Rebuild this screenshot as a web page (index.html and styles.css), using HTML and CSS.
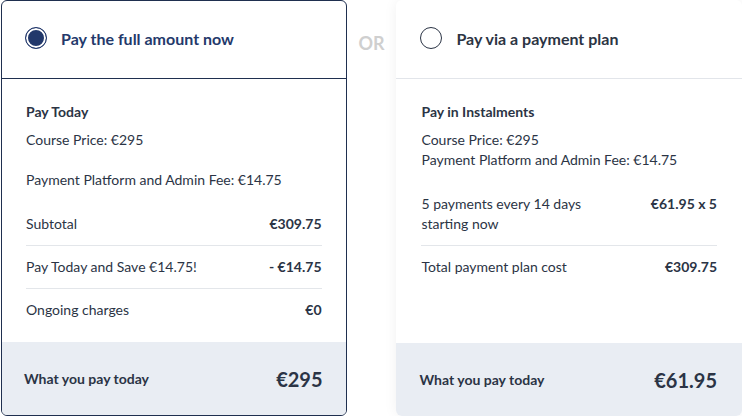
FILE: index.html
```html
<!DOCTYPE html>
<html lang="en">
<head>
<meta charset="UTF-8">
<title>Payment options</title>
<link rel="stylesheet" href="styles.css">
</head>
<body>

<div class="options">

    <!-- Pay in full -->
    <div class="card selected">
        <div class="card-head">
            <span class="radio checked"></span>
            <span class="head-label">Pay the full amount now</span>
        </div>
        <div class="card-body">
            <div class="body-title">Pay Today</div>
            <p class="line">Course Price: €295</p>
            <p class="line gap">Payment Platform and Admin Fee: €14.75</p>
            <div class="row first">
                <span>Subtotal</span>
                <strong>€309.75</strong>
            </div>
            <div class="row">
                <span>Pay Today and Save €14.75!</span>
                <strong>- €14.75</strong>
            </div>
            <div class="row last">
                <span>Ongoing charges</span>
                <strong>€0</strong>
            </div>
        </div>
        <div class="card-foot">
            <span>What you pay today</span>
            <span class="total">€295</span>
        </div>
    </div>

    <div class="or">OR</div>

    <!-- Payment plan -->
    <div class="card">
        <div class="card-head">
            <span class="radio"></span>
            <span class="head-label">Pay via a payment plan</span>
        </div>
        <div class="card-body">
            <div class="body-title">Pay in Instalments</div>
            <p class="line">Course Price: €295</p>
            <p class="line">Payment Platform and Admin Fee: €14.75</p>
            <div class="row first">
                <span>5 payments every 14 days<br>starting now</span>
                <strong>€61.95 x 5</strong>
            </div>
            <div class="row last">
                <span>Total payment plan cost</span>
                <strong>€309.75</strong>
            </div>
        </div>
        <div class="card-foot">
            <span>What you pay today</span>
            <span class="total">€61.95</span>
        </div>
    </div>

</div>

</body>
</html>
```

FILE: styles.css
```css
body {
    margin: 0;
    background: #fff;
    font-family: Lato, "Open Sans", sans-serif;
    font-size: 14px;
    color: #2b3445;
}
.options {
    display: flex;
    align-items: flex-start;
    padding-left: 1px;
}
.card {
    width: 346px;
    height: 416px;
    box-sizing: border-box;
    display: flex;
    flex-direction: column;
    background: #fff;
    border-radius: 6px;
    overflow: hidden;
    box-shadow: 0 0 14px rgba(0,0,0,0.06);
}
.card.selected {
    border: 1px solid #1f2f4f;
    box-shadow: none;
}
.card-head {
    height: 79px;
    box-sizing: border-box;
    display: flex;
    align-items: center;
    padding: 0 24px 2px;
    border-bottom: 1px solid #e2e5ea;
}
.card.selected .card-head {
    height: 78px;
    padding-left: 23px;
    padding-bottom: 3px;
    border-bottom-color: #1f2f4f;
}
.radio {
    width: 20px;
    height: 20px;
    border: 1px solid #2b3445;
    border-radius: 50%;
    box-sizing: content-box;
    margin-right: 14px;
    flex-shrink: 0;
}
.radio.checked {
    background: #22386b;
    box-shadow: inset 0 0 0 2px #fff;
    border-color: #22386b;
}
.head-label {
    font-size: 16px;
    font-weight: 700;
    color: #2c3443;
}
.card.selected .head-label {
    color: #24396b;
}
.card-body {
    flex: 1;
    padding: 23px 25px 0;
}
.card.selected .card-body {
    padding: 23px 24px 0;
}
.body-title {
    font-weight: 700;
    line-height: 20px;
    margin-bottom: 8px;
}
.line {
    margin: 0;
    line-height: 20px;
}
.line.gap {
    margin-top: 20px;
}
.row {
    display: flex;
    justify-content: space-between;
    align-items: flex-start;
    line-height: 20px;
    padding: 11px 0;
    border-bottom: 1px solid #e3e6ea;
}
.row.first {
    margin-top: 13px;
}
.row.last {
    border-bottom: none;
}
.row strong {
    font-weight: 700;
}
.card-foot {
    height: 73px;
    display: flex;
    justify-content: space-between;
    align-items: center;
    padding: 0 25px 0 23px;
    background: #e9edf3;
    font-weight: 700;
}
.card.selected .card-foot {
    padding: 0 23px 0 22px;
}
.total {
    font-size: 20px;
}
.or {
    width: 50px;
    text-align: center;
    padding-top: 32px;
    font-size: 18px;
    font-weight: 700;
    color: #cfcfcf;
}
```
